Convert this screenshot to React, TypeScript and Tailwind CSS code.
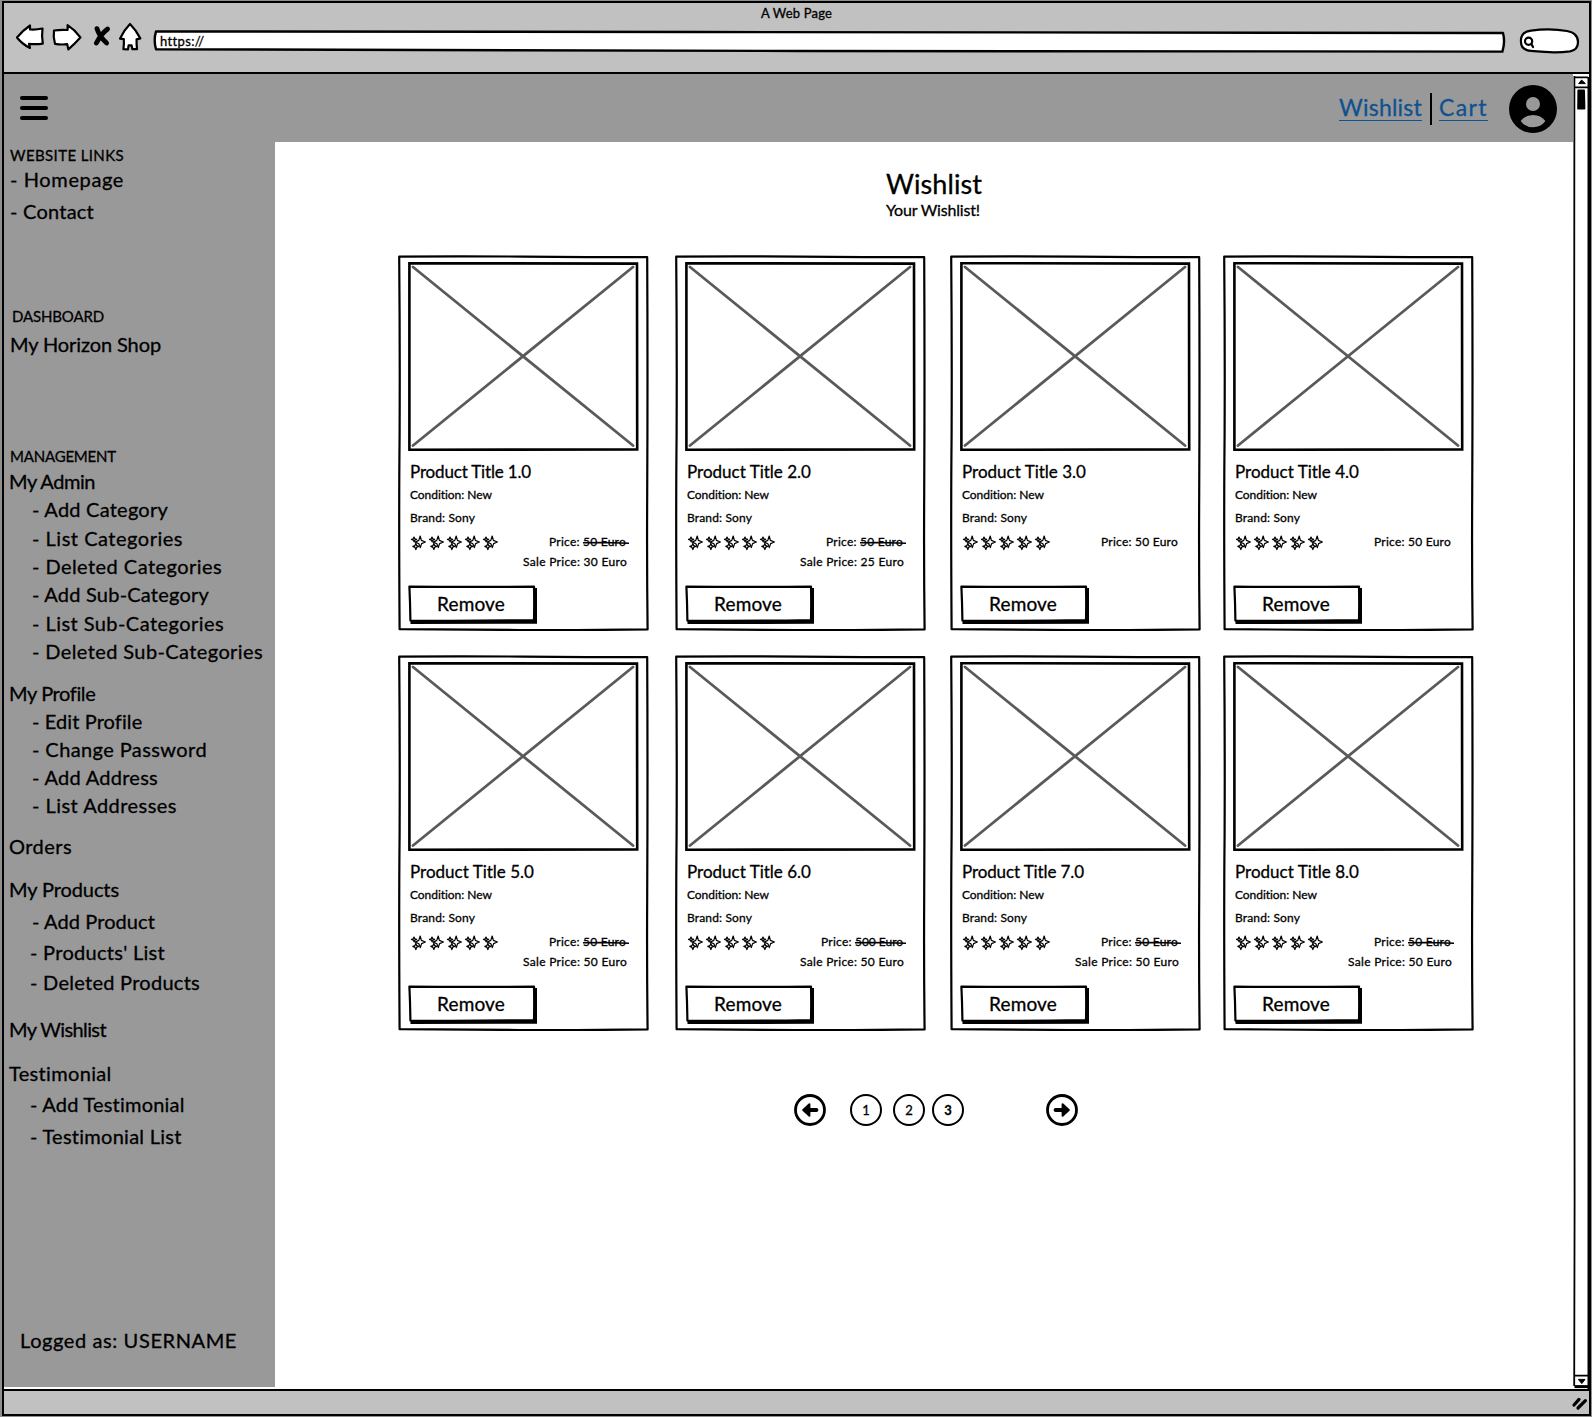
import { useLayoutEffect, useRef } from 'react';
import type { ReactNode } from 'react';

/* Text that is tracked so that it spans a given width. */
function Fit({ w, className = '', children }: { w: number; className?: string; children: string }) {
  const ref = useRef<HTMLSpanElement>(null);
  useLayoutEffect(() => {
    const el = ref.current;
    if (!el) return;
    el.style.letterSpacing = '0px';
    const natural = el.getBoundingClientRect().width;
    el.style.letterSpacing = `${(w - natural) / children.length}px`;
  }, [w, children]);
  return (
    <span ref={ref} className={`inline-block whitespace-pre ${className}`}>
      {children}
    </span>
  );
}

function NavRow({ className, w, small, children }: { className: string; w: number; small?: boolean; children: string }) {
  return (
    <li className={`h-6 leading-6 ${small ? 'text-[15px]' : 'text-[20px]'} ${className}`}>
      <Fit w={w}>{children}</Fit>
    </li>
  );
}

function Sidebar() {
  return (
    <ul className="h-[1245px] w-[271px] shrink-0 overflow-hidden bg-[#999999]">
      <NavRow small className="mt-px pl-1.5" w={114}>WEBSITE LINKS</NavRow>
      <NavRow className="pl-1.5" w={114}>- Homepage</NavRow>
      <NavRow className="mt-2 pl-1.5" w={84}>- Contact</NavRow>
      <NavRow small className="mt-[81px] pl-2" w={92}>DASHBOARD</NavRow>
      <NavRow className="mt-1 pl-1.5" w={151}>My Horizon Shop</NavRow>
      <NavRow small className="mt-[88px] pl-1.5" w={106}>MANAGEMENT</NavRow>
      <NavRow className="mt-px pl-[5px]" w={86}>My Admin</NavRow>
      <NavRow className="mt-1 pl-7" w={136}>- Add Category</NavRow>
      <NavRow className="mt-[5px] pl-7" w={151}>- List Categories</NavRow>
      <NavRow className="mt-1 pl-7" w={190}>- Deleted Categories</NavRow>
      <NavRow className="mt-1 pl-7" w={177}>- Add Sub-Category</NavRow>
      <NavRow className="mt-[5px] pl-7" w={192}>- List Sub-Categories</NavRow>
      <NavRow className="mt-1 pl-7" w={231}>- Deleted Sub-Categories</NavRow>
      <NavRow className="mt-[18px] pl-[5px]" w={86}>My Profile</NavRow>
      <NavRow className="mt-1 pl-7" w={110}>- Edit Profile</NavRow>
      <NavRow className="mt-1 pl-7" w={175}>- Change Password</NavRow>
      <NavRow className="mt-1 pl-7" w={126}>- Add Address</NavRow>
      <NavRow className="mt-1 pl-7" w={145}>- List Addresses</NavRow>
      <NavRow className="mt-[17px] pl-[5px]" w={63}>Orders</NavRow>
      <NavRow className="mt-[19px] pl-[5px]" w={110}>My Products</NavRow>
      <NavRow className="mt-2 pl-7" w={123}>- Add Product</NavRow>
      <NavRow className="mt-[7px] pl-[26px]" w={135}>- Products' List</NavRow>
      <NavRow className="mt-1.5 pl-[26px]" w={170}>- Deleted Products</NavRow>
      <NavRow className="mt-[23px] pl-[5px]" w={97}>My Wishlist</NavRow>
      <NavRow className="mt-5 pl-[5px]" w={103}>Testimonial</NavRow>
      <NavRow className="mt-[7px] pl-[26px]" w={155}>- Add Testimonial</NavRow>
      <NavRow className="mt-2 pl-[26px]" w={152}>- Testimonial List</NavRow>
      <NavRow className="mt-[180px] pl-4" w={217}>Logged as: USERNAME</NavRow>
    </ul>
  );
}

function Sparkle() {
  return (
    <svg width="18" height="18" viewBox="0 0 18 18" fill="none" stroke="#000" strokeWidth="1.2" strokeLinejoin="round" className="shrink-0">
      <path d="M10.2 2 L11.4 6.4 L15.4 8 L11.6 9.6 L10.3 13.6 L8.9 9.8 L5.2 8.1 L8.8 6.4 Z" />
      <path d="M4 3 L4.8 4.7 L6.6 5.4 L4.8 6.1 L4.1 7.8 L3.3 6.1 L1.5 5.4 L3.3 4.7 Z" />
      <path d="M5.8 9.4 L6.7 11.6 L8.8 12.4 L6.7 13.3 L5.9 15.6 L5 13.4 L2.8 12.4 L5 11.6 Z" />
    </svg>
  );
}

type Product = { title: string; tw: number; price: string; pw: number; struck?: boolean; sale?: string };

function Card({ p }: { p: Product }) {
  return (
    <article className="relative h-[376px] w-[251px]">
      <svg className="absolute inset-0" width="251" height="376" viewBox="0 0 251 376" fill="none" stroke="#000" strokeWidth="2.2" strokeLinejoin="round">
        <path d="M1.2 1.6 Q60 1 125 1.6 T249.2 2.2 Q249.8 120 249.2 240 Q248.8 310 249.6 374.4 Q180 375.4 120 375 T1.6 374.2 Q0.8 260 1.6 180 Q2 90 1.2 1.6 Z" />
      </svg>
      <div className="relative flex flex-col items-start pl-2.5 pt-[7px]">
        <svg width="231" height="189" viewBox="0 0 231 189" fill="none">
          <path d="M5 5 L225 183.5 M225 5 L5 183.5" stroke="#5a5a5a" strokeWidth="2.8" strokeLinecap="round" />
          <path d="M1.4 1.2 L229 1.6 L229.2 187.4 L1.4 187.8 Z" stroke="#000" strokeWidth="2.6" />
        </svg>
        <div className="mt-[9px] h-6 pl-0.5 text-[17px] leading-6">
          <Fit w={p.tw}>{p.title}</Fit>
        </div>
        <div className="-mt-px h-[23px] pl-0.5 text-[12px] leading-[23px]">
          <Fit w={82}>Condition: New</Fit>
        </div>
        <div className="h-[23px] pl-0.5 text-[12px] leading-[23px]">
          <Fit w={65}>Brand: Sony</Fit>
        </div>
        <div className="flex w-[219px] items-start justify-between">
          <div className="flex pl-0.5 pt-[5px]">
            <Sparkle />
            <Sparkle />
            <Sparkle />
            <Sparkle />
            <Sparkle />
          </div>
          <div className="flex h-[56px] flex-col items-end pt-0.5 text-[12px]">
            <div className="flex h-5 leading-[22px]">
              <Fit w={34}>Price: </Fit>
              <span className="relative mr-px">
                <Fit w={p.pw}>{p.price}</Fit>
                {p.struck && (
                  <svg className="absolute left-0 top-2.5" width="52" height="4" viewBox="0 0 52 4" fill="none">
                    <path d={`M0 1.8 L20 1.4 L${p.pw + 3} 2.2`} stroke="#000" strokeWidth="1.5" />
                  </svg>
                )}
              </span>
            </div>
            {p.sale && (
              <div className="h-5 leading-[22px]">
                <Fit w={104}>{p.sale}</Fit>
              </div>
            )}
          </div>
        </div>
        <button className="relative h-10 w-[130px] pb-1 text-center text-[19px] leading-[37px]">
          <svg className="absolute inset-0" width="130" height="40" viewBox="0 0 130 40">
            <path d="M2.5 36 L2.5 39 L129 38.8 L129 3 L125 3 Z" fill="#000" />
            <path d="M1.4 1.6 Q60 2.2 126 1.6 Q126.4 18 126 35 Q60 36.2 2.4 35.6 Q2.2 18 1.4 1.6 Z" fill="#fff" stroke="#000" strokeWidth="2.2" strokeLinejoin="round" />
          </svg>
          <span className="relative -left-0.5">
            <Fit w={68}>Remove</Fit>
          </span>
        </button>
      </div>
    </article>
  );
}

const rows: Product[][] = [
  [
    { title: 'Product Title 1.0', tw: 121, price: '50 Euro', pw: 43, struck: true, sale: 'Sale Price: 30 Euro' },
    { title: 'Product Title 2.0', tw: 124, price: '50 Euro', pw: 43, struck: true, sale: 'Sale Price: 25 Euro' },
    { title: 'Product Title 3.0', tw: 124, price: '50 Euro', pw: 43 },
    { title: 'Product Title 4.0', tw: 124, price: '50 Euro', pw: 43 },
  ],
  [
    { title: 'Product Title 5.0', tw: 124, price: '50 Euro', pw: 43, struck: true, sale: 'Sale Price: 50 Euro' },
    { title: 'Product Title 6.0', tw: 124, price: '500 Euro', pw: 48, struck: true, sale: 'Sale Price: 50 Euro' },
    { title: 'Product Title 7.0', tw: 122, price: '50 Euro', pw: 43, struck: true, sale: 'Sale Price: 50 Euro' },
    { title: 'Product Title 8.0', tw: 124, price: '50 Euro', pw: 43, struck: true, sale: 'Sale Price: 50 Euro' },
  ],
];

function PageDot({ className, children }: { className: string; children: ReactNode }) {
  return (
    <span className={`flex size-8 items-center justify-center rounded-full border-2 border-black text-[13px] leading-none ${className}`}>
      {children}
    </span>
  );
}

function ArrowDot({ className }: { className: string }) {
  return (
    <svg className={className} width="32" height="32" viewBox="0 0 32 32" fill="none" stroke="#000">
      <circle cx="16" cy="16" r="14.5" strokeWidth="2.8" />
      <path d="M22.4 16 H14" strokeWidth="4" strokeLinecap="round" />
      <path d="M9.2 16 L15.4 10.3 V21.7 Z" fill="#000" strokeWidth="2" strokeLinejoin="round" />
    </svg>
  );
}

function TitleBar() {
  return (
    <header className="flex h-[69px] flex-col bg-[#c1c1c1]">
      <div className="h-[17px] pl-[757px] text-[13px] leading-[21px]">
        <Fit w={71}>A Web Page</Fit>
      </div>
      <div className="flex">
        <svg width="146" height="36" viewBox="4 20 146 36" fill="#fff" stroke="#000" strokeWidth="2.2" strokeLinejoin="round">
          <path d="M17 37.5 Q22 31 30 25.5 L30 29.5 Q36 30 42.5 28.5 Q41.5 36 42.8 43.6 Q36 44.6 29 43.8 L30 48 Q22 44 17 37.5 Z" />
          <path d="M54 30.5 Q61 29.4 67.6 30 L67.6 25.2 Q75 30 80.4 37.4 Q75 43.4 68.4 49.4 L67.2 44.2 Q61 45 55 43.8 Q53 37 54 30.5 Z" />
          <path d="M97 28.6 Q99 36 106.6 43 M107.6 29 Q101 34 96.4 43" fill="none" strokeWidth="4.8" strokeLinecap="round" />
          <path d="M130 24 Q136 30 140.4 38.4 L136.6 39.4 Q136.4 44 137 49.2 L132.4 49.2 L131.6 45.4 L128.6 45.4 L128 49.4 L123.4 49.2 Q124.2 44 123.8 39.2 L120 38.6 Q124 30 130 24 Z" />
        </svg>
        <div className="relative h-8 w-[1364px] pt-[11px]">
          <svg className="absolute left-0 top-0" width="1364" height="36" viewBox="150 20 1364 36">
            <path d="M156 31.4 L700 32 L1503 33 Q1505.4 42 1502.4 51.6 L800 51 L156 49.2 Q153.4 40 156 31.4 Z" fill="#fff" stroke="#000" strokeWidth="2.4" strokeLinejoin="round" />
          </svg>
          <div className="relative pl-2.5 text-[13px] leading-5">
            <Fit w={44}>https://</Fit>
          </div>
        </div>
        <svg width="72" height="36" viewBox="1514 20 72 36" fill="none" stroke="#000" strokeWidth="2.2">
          <path d="M1521 42 Q1520 32 1531 30.6 Q1550 28 1567 31 Q1578 33 1578 42 Q1578 50 1570 51.4 Q1555 53.4 1534 51.2 Q1521 51 1521 42 Z" fill="#fff" />
          <circle cx="1528.6" cy="41.2" r="3.6" />
          <path d="M1531.4 44 L1533 47" strokeLinecap="round" />
        </svg>
      </div>
    </header>
  );
}

function TopNav() {
  return (
    <nav className="flex h-[68px] bg-[#999999] text-[23px] text-[#0f5290]">
      <svg className="ml-4 mt-[22px]" width="28" height="24" viewBox="0 0 28 24" stroke="#000" strokeWidth="4" strokeLinecap="round">
        <path d="M2 2 H26 M2 12 H26 M2 22 H26" />
      </svg>
      <div className="ml-auto mr-4 flex">
        <a className="mt-[17px] h-[30px] border-b-[1.5px] border-[#0f5290] leading-[33px]">
          <Fit w={83}>Wishlist</Fit>
        </a>
        <span className="ml-2 mt-[19px] h-8 w-0.5 bg-black" />
        <a className="ml-[7px] mt-[17px] h-[30px] border-b-[1.5px] border-[#0f5290] leading-[33px]">
          <Fit w={49}>Cart</Fit>
        </a>
        <svg className="ml-[21px] mt-[11px]" width="48" height="48" viewBox="0 0 48 48">
          <circle cx="24" cy="24" r="24" fill="#000" />
          <circle cx="24" cy="19" r="7" fill="#999999" />
          <path d="M11.6 36 Q16 30 24 30 T36.4 36 Q32 42.2 24 42.2 T11.6 36 Z" fill="#999999" />
        </svg>
      </div>
    </nav>
  );
}

function Scrollbar() {
  return (
    <svg className="shrink-0" width="16" height="1315" viewBox="1573 74 16 1315" fill="none" stroke="#000">
      <path d="M1574 74 H1589 V1388 H1574 Z" fill="#fff" stroke="none" />
      <path d="M1574.4 76 L1574 600 L1574.6 1200 L1574.2 1386" strokeWidth="1.8" />
      <path d="M1588.5 77 V1389" strokeWidth="2" />
      <path d="M1574 77.4 H1588 M1574 87.4 H1588 M1574 1375.6 H1588" strokeWidth="1.6" />
      <path d="M1574.5 1386.6 H1590" strokeWidth="3" />
      <path d="M1578.6 83.6 L1581.6 80 L1585.4 83.6 Z M1578.4 1379.4 L1585 1379.4 L1581.8 1383.6 Z" fill="#000" />
      <path d="M1578.4 90.6 L1584 90.6 L1584.4 108.4 L1578.2 108.6 Z" fill="#000" strokeWidth="2" strokeLinejoin="round" />
    </svg>
  );
}

export default function App() {
  return (
    <div className="h-[1417px] w-[1592px] overflow-hidden bg-[#8f8f8f] pl-0.5 pt-px font-[Lato,'Open_Sans',sans-serif] text-black [-webkit-text-stroke:0.3px]">
      <div className="h-[1415px] w-[1589px] border-2 border-black bg-white">
        <TitleBar />
        <div className="h-0.5 bg-black" />
        <div className="flex h-[1315px]">
          <div className="flex w-[1569px] shrink-0 flex-col">
            <TopNav />
            <div className="flex">
              <Sidebar />
              <main className="flex-1">
                <div className="flex flex-col pl-[611px] pt-[26px]">
                  <h1 className="h-8 text-[27px] leading-8">
                    <Fit w={96}>Wishlist</Fit>
                  </h1>
                  <h2 className="h-5 text-[16px] leading-5">
                    <Fit w={94}>Your Wishlist!</Fit>
                  </h2>
                </div>
                <div className="mt-[35px] flex flex-col gap-6 pl-[123px]">
                  {rows.map((row, i) => (
                    <div key={i} className="grid grid-cols-[277px_275px_273px_251px]">
                      {row.map((p) => (
                        <Card key={p.title} p={p} />
                      ))}
                    </div>
                  ))}
                </div>
                <div className="mt-[63px] flex pl-[519px]">
                  <ArrowDot className="" />
                  <PageDot className="ml-6">1</PageDot>
                  <PageDot className="ml-[11px]">2</PageDot>
                  <PageDot className="ml-[7px] font-bold">3</PageDot>
                  <ArrowDot className="ml-[82px] rotate-180" />
                </div>
              </main>
            </div>
          </div>
          <Scrollbar />
        </div>
        <footer className="flex h-[25px] justify-end border-t-2 border-black bg-[#c1c1c1]">
          <svg width="20" height="23" viewBox="0 0 20 23" stroke="#000" strokeWidth="3.2" strokeLinecap="round">
            <path d="M5 14 L10 8.4 M9 17 L16.4 9.6" />
          </svg>
        </footer>
      </div>
    </div>
  );
}
